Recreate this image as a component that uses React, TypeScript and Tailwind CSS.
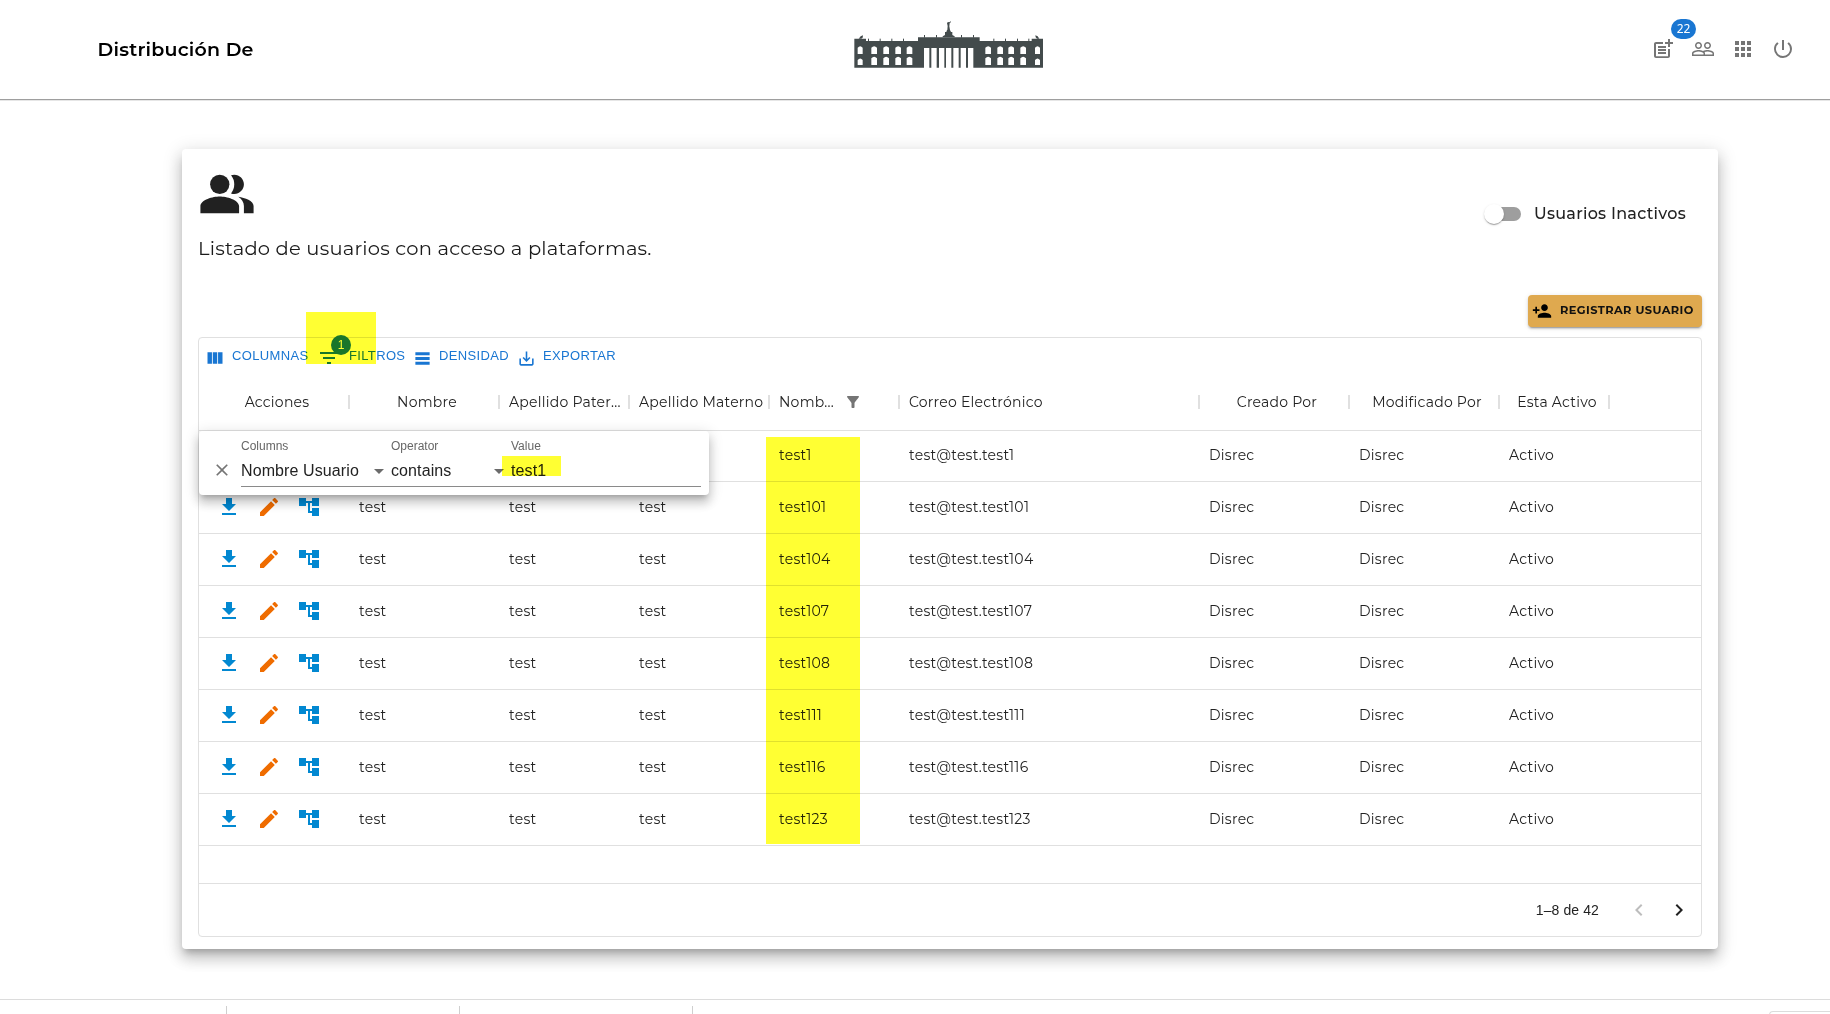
import type { ReactNode } from "react";
import {
  MdPostAdd,
  MdPeopleOutline,
  MdApps,
  MdPowerSettingsNew,
  MdPeopleAlt,
  MdPersonAdd,
} from "react-icons/md";

const GRID = "grid grid-cols-[150px_150px_130px_140px_130px_300px_150px_150px_110px_1fr]";

const USERS = ["test1", "test101", "test104", "test107", "test108", "test111", "test116", "test123"];

function Icon({ d, className }: { d: string; className: string }) {
  return (
    <svg viewBox="0 0 24 24" fill="currentColor" className={`shrink-0 ${className}`}>
      <path d={d} />
    </svg>
  );
}

const ICONS = {
  columns: "M14.67,5v14H9.33V5H14.67z M15.67,19H21V5h-5.33V19z M8.33,19V5H3v14H8.33z",
  filter: "M10 18h4v-2h-4v2zM3 6v2h18V6H3zm3 7h12v-2H6v2z",
  density: "M21,8H3V4h18V8z M21,10H3v4h18V10z M21,16H3v4h18V16z",
  save: "M19 12v7H5v-7H3v7c0 1.1.9 2 2 2h14c1.1 0 2-.9 2-2v-7h-2zm-6 .67l2.59-2.58L17 11.5l-5 5-5-5 1.41-1.41L11 12.67V3h2z",
  funnel:
    "M4.25,5.61C6.27,8.2,10,13,10,13v6c0,0.55,0.45,1,1,1h2c0.55,0,1-0.45,1-1v-6c0,0,3.72-4.8,5.74-7.39 C20.25,4.95,19.78,4,18.95,4H5.04C4.21,4,3.74,4.95,4.25,5.61z",
  download: "M19 9h-4V3H9v6H5l7 7 7-7zM5 18v2h14v-2H5z",
  edit: "M3 17.25V21h3.75L17.81 9.94l-3.75-3.75L3 17.25zM20.71 7.04c.39-.39.39-1.02 0-1.41l-2.34-2.34c-.39-.39-1.02-.39-1.41 0l-1.83 1.83 3.75 3.75 1.83-1.83z",
  tree: "M22 11V3h-7v3H9V3H2v8h7V8h2v10h4v3h7v-8h-7v3h-2V8h2v3z",
  close:
    "M19 6.41L17.59 5 12 10.59 6.41 5 5 6.41 10.59 12 5 17.59 6.41 19 12 13.41 17.59 19 19 17.59 13.41 12z",
  left: "M15.41 16.59L10.83 12l4.58-4.59L14 6l-6 6 6 6z",
  right: "M8.59 16.59L13.17 12 8.59 7.41 10 6l6 6-6 6z",
};

const WINDOWS = [53, 94, 130, 166, 200, 436, 472, 505, 541, 585];
const COLUMNS = [252, 274, 297, 318, 340, 362, 384];
const WALL_PINS = [85, 120, 155, 190, 461, 496, 532, 566];
const ROOF_PINS = [253, 289, 364, 400];

function PalaceLogo() {
  return (
    <svg viewBox="0 0 660 210" className="h-[70px] w-[220px]" fill="#434b4c">
      <path d="M43 86h35v7h156V82h185v11h156v-7h34v87H43z" />
      <path d="M308 82v-3l7-4v-9h4l2-6h9l3 6h4v9l7 4v3z" />
      <path d="M322 60l1-12-2-9 3-3 4 1 4-3 1 2-4 4-1 9 2 11z" />
      <path d="M56 86l6-7 7-3-1 7-4 3zM598 86l-5-7-7-3 1 6 4 4z" />
      {WALL_PINS.map((x) => (
        <rect key={x} x={x - 1} y={86} width={3} height={8} />
      ))}
      {ROOF_PINS.map((x) => (
        <rect key={x} x={x - 1} y={75} width={3} height={8} />
      ))}
      <g fill="#fff">
        {WINDOWS.map((x) => {
          const w = x === 53 || x === 585 ? 15 : 17;
          return [107, 139].map((y, i) => {
            const top = y + (w === 15 && i === 1 ? 5 : 0);
            return (
              <path key={`${x}-${y}`} d={`M${x} ${i ? 165 : 132}V${top + 6}q${w / 2} -9 ${w} 0V${i ? 165 : 132}z`} />
            );
          });
        })}
        {COLUMNS.map((x) => (
          <rect key={x} x={x} y={114} width={16} height={60} />
        ))}
      </g>
    </svg>
  );
}

function Header() {
  return (
    <header className="flex h-[101px] shrink-0 items-start border-b border-[#e6e6e6]">
      <div className="flex h-[100px] w-full items-start border-b border-[#9e9e9e]">
        <h1 className="mt-[35px] ml-[97.5px] w-[742.5px] text-[19px] leading-[30px] font-semibold tracking-[0.22px] text-black">
          Distribución De
        </h1>
        <div className="mt-[10px]">
          <PalaceLogo />
        </div>
        <nav className="mt-[37px] ml-[591px] flex gap-4 text-[#757575]">
          <span className="relative">
            <MdPostAdd size={24} />
            <span className="absolute -top-[18px] left-5 flex h-5 w-[25px] items-center justify-center rounded-full bg-[#1976d2] font-['Noto_Sans',sans-serif] text-xs text-white">
              22
            </span>
          </span>
          <MdPeopleOutline size={24} />
          <MdApps size={24} />
          <MdPowerSettingsNew size={24} />
        </nav>
      </div>
    </header>
  );
}

function ToolbarButton({ icon, children, className }: { icon: ReactNode; children: string; className: string }) {
  return (
    <button className={`flex items-center ${className}`}>
      {icon}
      {children}
    </button>
  );
}

function Toolbar() {
  return (
    <div className="flex h-9 items-center pl-[6px] font-['Liberation_Sans',Arial,sans-serif] text-[13px] tracking-[0.35px] text-[#1976d2]">
      <ToolbarButton className="w-[112px]" icon={<Icon d={ICONS.columns} className="mt-1 mr-[7px] size-5" />}>
        COLUMNAS
      </ToolbarButton>
      <ToolbarButton
        className="w-24"
        icon={
          <span className="relative mt-1 mr-2">
            <Icon d={ICONS.filter} className="size-6" />
            <span className="absolute -top-[11px] left-[14px] flex size-5 items-center justify-center rounded-full bg-[#1976d2] text-xs tracking-normal text-white">
              1
            </span>
          </span>
        }
      >
        FILTROS
      </ToolbarButton>
      <ToolbarButton className="w-[104px]" icon={<Icon d={ICONS.density} className="mt-1 mr-[7px] size-[19px]" />}>
        DENSIDAD
      </ToolbarButton>
      <ToolbarButton className="" icon={<Icon d={ICONS.save} className="mt-1 mr-[7px] size-[19px]" />}>
        EXPORTAR
      </ToolbarButton>
    </div>
  );
}

function HeadCell({ children, center }: { children: ReactNode; center?: boolean }) {
  return (
    <div
      className={`relative flex items-center whitespace-nowrap pl-[10px] ${center ? "justify-center pr-1" : ""}`}
    >
      {children}
      <span className="absolute top-[21px] -right-px h-[14px] w-[2px] bg-[#e0e0e0]" />
    </div>
  );
}

function TableHead() {
  return (
    <div className={`${GRID} h-[57px] border-b border-[#e0e0e0] text-sm tracking-[0.24px] text-[#222]`}>
      <HeadCell center>Acciones</HeadCell>
      <HeadCell center>Nombre</HeadCell>
      <HeadCell>Apellido Pater...</HeadCell>
      <HeadCell>Apellido Materno</HeadCell>
      <HeadCell>
        <span className="w-[65px]">Nomb...</span>
        <Icon d={ICONS.funnel} className="size-[18px] text-[#757575]" />
      </HeadCell>
      <HeadCell>Correo Electrónico</HeadCell>
      <HeadCell center>Creado Por</HeadCell>
      <HeadCell center>Modificado Por</HeadCell>
      <HeadCell center>Esta Activo</HeadCell>
    </div>
  );
}

function UserRow({ user, first }: { user: string; first: boolean }) {
  return (
    <div
      className={`${GRID} ${first ? "h-[51px]" : "h-[52px]"} items-center border-b border-[#e0e0e0] pb-[2px] text-sm tracking-[0.26px] text-[#222] [&>span]:pl-[10px]`}
    >
      <div className="flex gap-4 pl-[18px]">
        <Icon d={ICONS.download} className="size-6 text-[#0288d1]" />
        <Icon d={ICONS.edit} className="size-6 text-[#ef6c00]" />
        <Icon d={ICONS.tree} className="size-6 text-[#0288d1]" />
      </div>
      <span>test</span>
      <span>test</span>
      <span>test</span>
      <span>{user}</span>
      <span>test@test.{user}</span>
      <span>Disrec</span>
      <span>Disrec</span>
      <span>Activo</span>
    </div>
  );
}

function Arrow() {
  return (
    <svg viewBox="0 0 10 5" className="mr-[7px] h-[5px] w-[10px]" fill="#6b6b6b">
      <path d="M0 0h10L5 5z" />
    </svg>
  );
}

function FilterPanel() {
  return (
    <div className="absolute top-[93px] left-0 flex h-16 w-[510px] rounded bg-white font-['Liberation_Sans',Arial,sans-serif] shadow-[0px_5px_5px_-3px_rgba(0,0,0,0.2),0px_8px_10px_1px_rgba(0,0,0,0.14),0px_3px_14px_2px_rgba(0,0,0,0.12)]">
      <Icon d={ICONS.close} className="mt-[29px] ml-[13px] size-5 text-[#757575]" />
      <div className="mt-[7px] ml-[9px] grid h-[49px] w-[460px] grid-cols-[150px_120px_1fr] border-b border-[#8a8a8a]">
        {[
          ["Columns", "Nombre Usuario"],
          ["Operator", "contains"],
          ["Value", "test1"],
        ].map(([label, value], i) => (
          <div key={label}>
            <div className="text-xs leading-4 text-[#666]">{label}</div>
            <div className="mt-[5px] flex items-center justify-between text-base leading-6 tracking-[0.1px] text-[#222]">
              {value}
              {i < 2 && <Arrow />}
            </div>
          </div>
        ))}
      </div>
    </div>
  );
}

function UsersGrid() {
  return (
    <div className="relative flex h-[600px] w-[1504px] flex-col rounded border border-[#e0e0e0]">
      <Toolbar />
      <TableHead />
      {USERS.map((u, i) => (
        <UserRow key={u} user={u} first={i === 0} />
      ))}
      <div className="h-[38px] border-b border-[#e0e0e0]" />
      <div className="flex flex-1 items-center justify-end pr-[10px] font-['Liberation_Sans',Arial,sans-serif] text-sm text-[#222]">
        <span className="mr-7 tracking-[0.1px]">1–8 de 42</span>
        <Icon d={ICONS.left} className="mr-4 size-6 text-[#bdbdbd]" />
        <Icon d={ICONS.right} className="size-6" />
      </div>
      <FilterPanel />
      <div className="absolute -top-[26px] left-[107px] h-[52px] w-[70px] bg-[#ffff33] mix-blend-multiply" />
      <div className="absolute top-[118px] left-[303px] h-5 w-[59px] bg-[#ffff33] mix-blend-multiply" />
      <div className="absolute top-[99px] left-[567px] h-[407px] w-[94px] bg-[#ffff33] mix-blend-multiply" />
    </div>
  );
}

export default function App() {
  return (
    <div className="flex h-[1014px] w-[1830px] flex-col overflow-hidden bg-white font-['Montserrat','Inter',sans-serif]">
      <Header />
      <main className="mt-12 ml-[182px] h-[800px] w-[1536px] shrink-0 rounded bg-white px-4 pt-4 shadow-[0px_6px_6px_-3px_rgba(0,0,0,0.2),0px_10px_14px_1px_rgba(0,0,0,0.14),0px_4px_18px_3px_rgba(0,0,0,0.12)]">
        <div className="flex h-[130px] justify-between">
          <div>
            <MdPeopleAlt size={58} className="text-[#212121]" />
            <p className="mt-[10px] text-[19.5px] leading-[30px] tracking-[0.22px] text-[#1a1a1a]">
              Listado de usuarios con acceso a plataformas.
            </p>
          </div>
          <div className="mt-[39px] mr-4 flex h-5 items-center">
            <span className="relative mr-[13px] h-[14px] w-[34px] rounded-full bg-[#9e9e9e]">
              <span className="absolute -top-[3px] -left-[3px] size-5 rounded-full bg-white shadow-[0px_2px_1px_-1px_rgba(0,0,0,0.2),0px_1px_1px_0px_rgba(0,0,0,0.14),0px_1px_3px_0px_rgba(0,0,0,0.12)]" />
            </span>
            <span className="text-base font-medium tracking-[0.27px] text-[#222]">Usuarios Inactivos</span>
          </div>
        </div>
        <div className="mb-[10px] flex justify-end">
          <button className="flex h-8 w-[174px] items-center rounded bg-[#dfa94f] pl-1 text-[11.4px] font-bold tracking-[0.4px] whitespace-nowrap text-[#111] shadow-[0px_3px_1px_-2px_rgba(0,0,0,0.2),0px_2px_2px_0px_rgba(0,0,0,0.14),0px_1px_5px_0px_rgba(0,0,0,0.12)]">
            <MdPersonAdd size={20} className="mr-2 shrink-0 text-black" />
            REGISTRAR USUARIO
          </button>
        </div>
        <UsersGrid />
      </main>
      <footer className="mt-[50px] flex h-[15px] justify-between border-t border-[#dcdcdc] pt-[6px]">
        <div className="flex h-2">
          <span className="w-[227px] border-r border-[#cfcfcf]" />
          <span className="w-[233px] border-r border-[#cfcfcf]" />
          <span className="w-[233px] border-r border-[#cfcfcf]" />
        </div>
        <div className="mt-[5px] h-3 w-[61px] rounded-tl border-t border-l border-[#dcdcdc]" />
      </footer>
    </div>
  );
}
